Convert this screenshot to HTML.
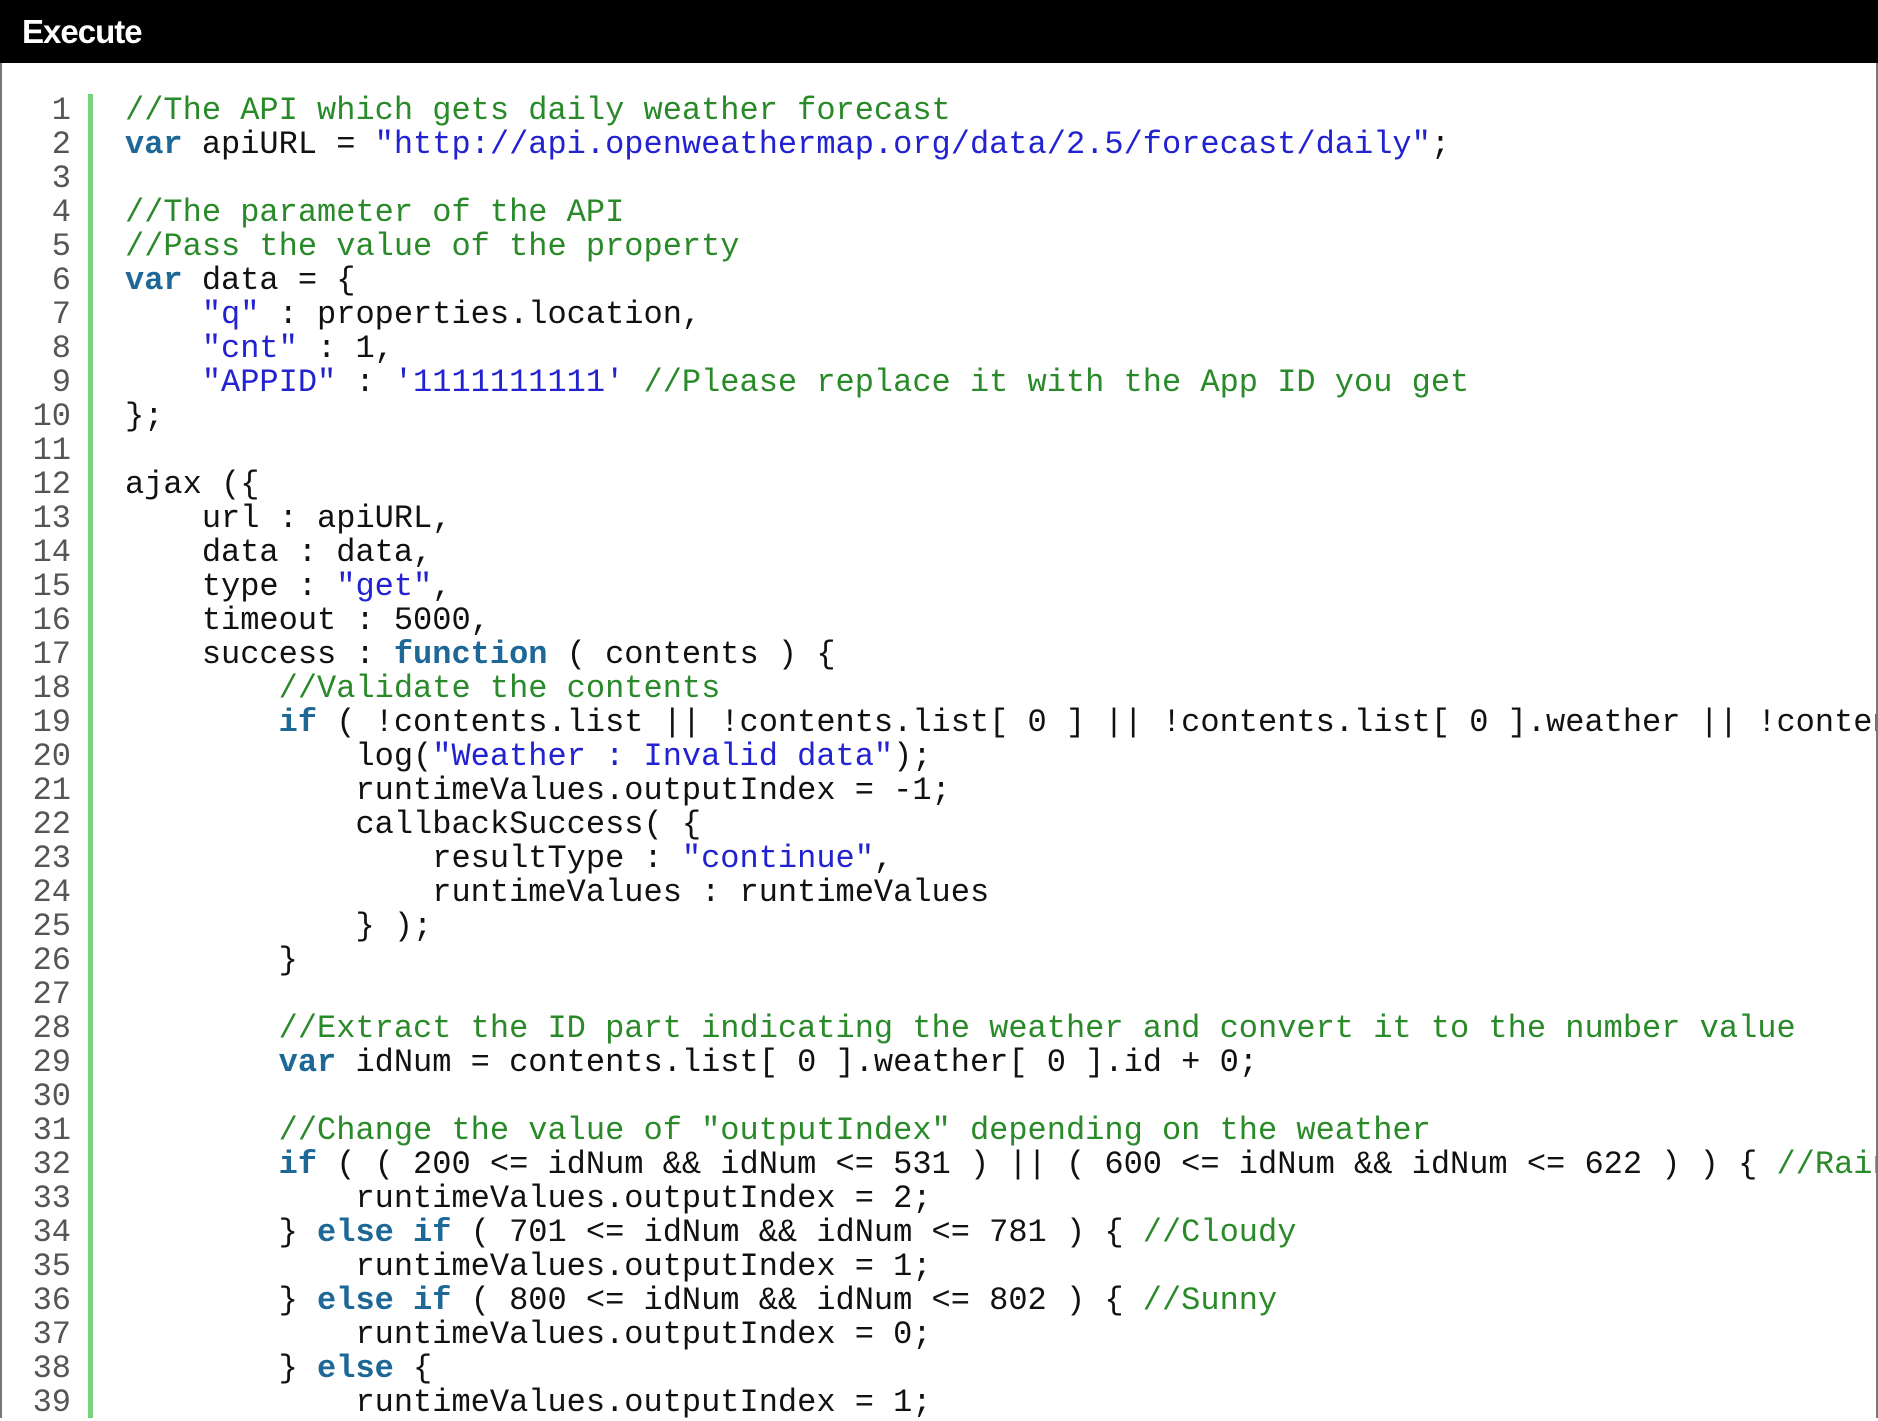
<!DOCTYPE html>
<html><head><meta charset="utf-8"><style>
html,body{margin:0;padding:0;background:#fff;width:1878px;height:1418px;overflow:hidden}
.hdr{position:absolute;left:0;top:0;width:1878px;height:63px;background:#000;color:#fff;font:bold 33px "Liberation Sans",sans-serif;line-height:64px;padding-left:22px;box-sizing:border-box;letter-spacing:-1px}
.frame{position:absolute;left:0;top:63px;width:1878px;height:1355px;border-left:2px solid #777;border-right:2px solid #777;box-sizing:border-box}
.gut{position:absolute;left:0;top:94px;width:71px;text-align:right;font:32px/34px "Liberation Mono",monospace;color:#555;white-space:pre}
.bar{position:absolute;left:88px;top:94px;width:5px;height:1324px;background:#77d47a}
.code{position:absolute;left:125px;top:94px;right:2px;overflow:hidden;font:32px/34px "Liberation Mono",monospace;color:#111;white-space:pre}
.c{color:#2a8a2a}.k{color:#1d6896;font-weight:bold}.s{color:#2222d0}
</style></head><body>
<div class="hdr">Execute</div>
<div class="frame"></div>
<div class="gut">1
2
3
4
5
6
7
8
9
10
11
12
13
14
15
16
17
18
19
20
21
22
23
24
25
26
27
28
29
30
31
32
33
34
35
36
37
38
39</div>
<div class="bar"></div>
<div class="code"><span class="c">//The API which gets daily weather forecast</span>
<span class="k">var</span> apiURL = <span class="s">"http://api.openweathermap.org/data/2.5/forecast/daily"</span>;

<span class="c">//The parameter of the API</span>
<span class="c">//Pass the value of the property</span>
<span class="k">var</span> data = {
    <span class="s">"q"</span> : properties.location,
    <span class="s">"cnt"</span> : 1,
    <span class="s">"APPID"</span> : <span class="s">'1111111111'</span> <span class="c">//Please replace it with the App ID you get</span>
};

ajax ({
    url : apiURL,
    data : data,
    type : <span class="s">"get"</span>,
    timeout : 5000,
    success : <span class="k">function</span> ( contents ) {
        <span class="c">//Validate the contents</span>
        <span class="k">if</span> ( !contents.list || !contents.list[ 0 ] || !contents.list[ 0 ].weather || !contents.list[ 0 ].weather[ 0 ] ) {
            log(<span class="s">"Weather : Invalid data"</span>);
            runtimeValues.outputIndex = -1;
            callbackSuccess( {
                resultType : <span class="s">"continue"</span>,
                runtimeValues : runtimeValues
            } );
        }

        <span class="c">//Extract the ID part indicating the weather and convert it to the number value</span>
        <span class="k">var</span> idNum = contents.list[ 0 ].weather[ 0 ].id + 0;

        <span class="c">//Change the value of "outputIndex" depending on the weather</span>
        <span class="k">if</span> ( ( 200 &lt;= idNum &amp;&amp; idNum &lt;= 531 ) || ( 600 &lt;= idNum &amp;&amp; idNum &lt;= 622 ) ) { <span class="c">//Rainy or Snowy</span>
            runtimeValues.outputIndex = 2;
        } <span class="k">else if</span> ( 701 &lt;= idNum &amp;&amp; idNum &lt;= 781 ) { <span class="c">//Cloudy</span>
            runtimeValues.outputIndex = 1;
        } <span class="k">else if</span> ( 800 &lt;= idNum &amp;&amp; idNum &lt;= 802 ) { <span class="c">//Sunny</span>
            runtimeValues.outputIndex = 0;
        } <span class="k">else</span> {
            runtimeValues.outputIndex = 1;</div>
</body></html>
